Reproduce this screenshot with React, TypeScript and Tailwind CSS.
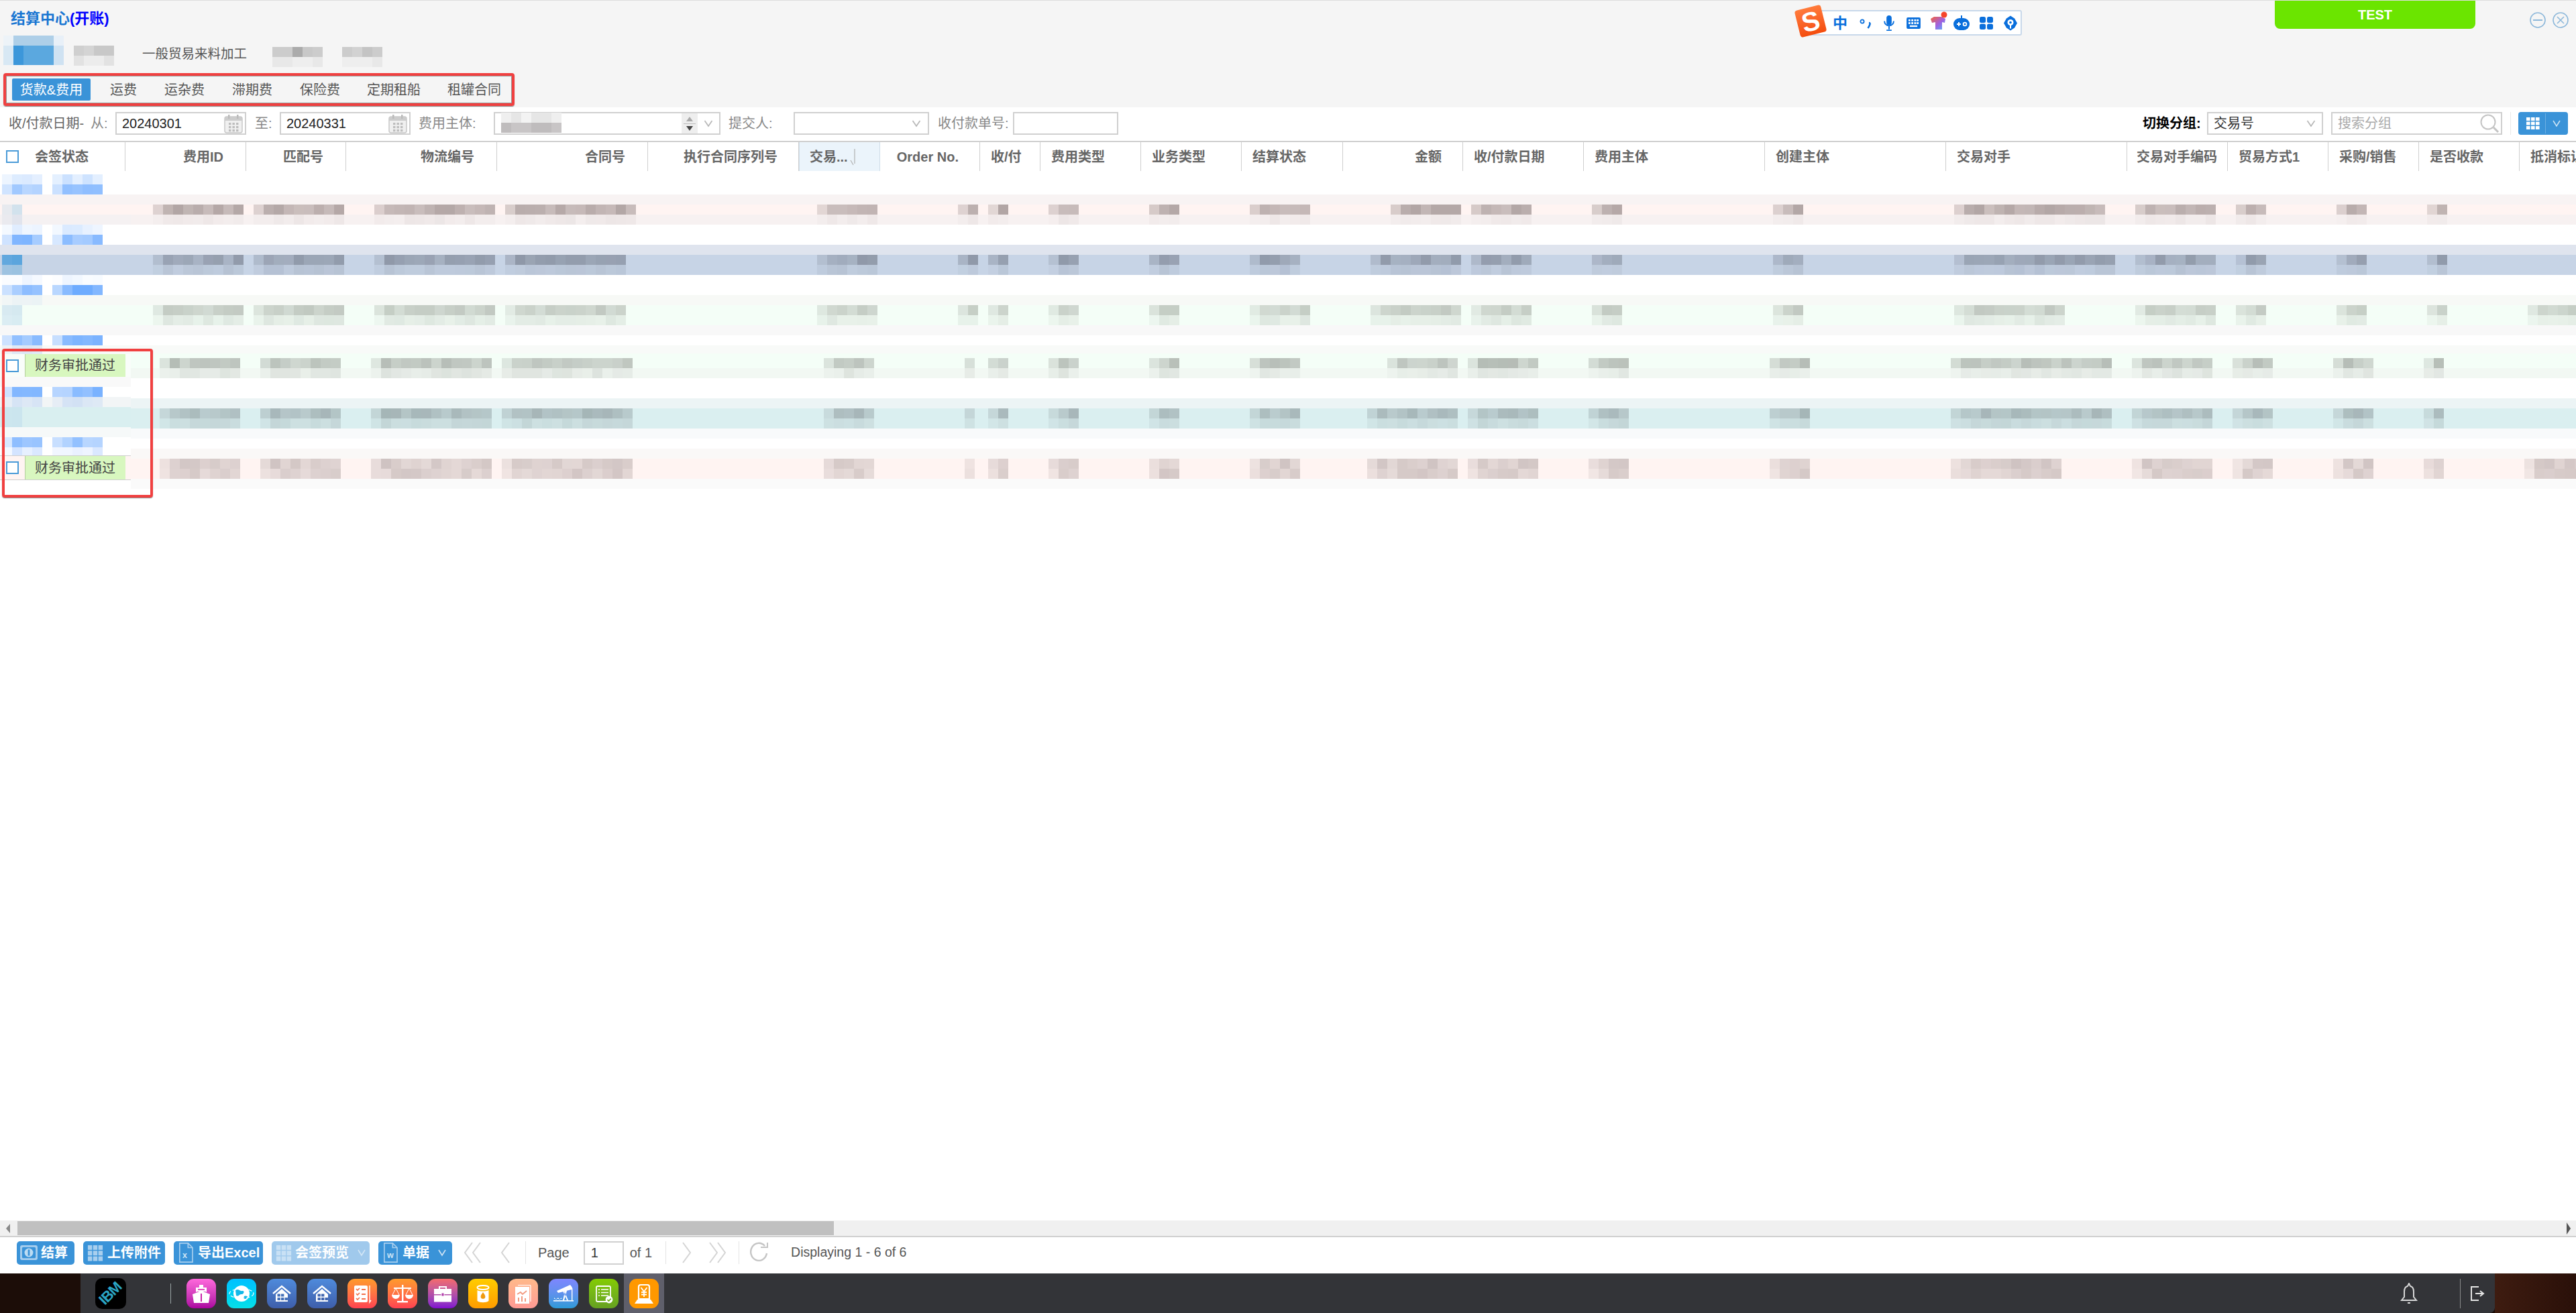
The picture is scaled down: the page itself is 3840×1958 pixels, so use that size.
import React from "react";

type Seg = [number, number];
function rng(seed: number) {
  let s = seed;
  return () => {
    s = (s * 1664525 + 1013904223) % 4294967296;
    return s / 4294967296;
  };
}

function Mosaic({ segs, left = 0, rgb, min, max, seed, width, h = 15 }: { segs: Seg[]; left?: number; rgb: string; min: number; max: number; seed: number; width: number; h?: number }) {
  const r = rng(seed);
  const rects: React.ReactNode[] = [];
  segs.forEach(([a, b], si) => {
    for (let x = a, i = 0; x < b; x += 15, i++) {
      const edge = x === a ? 0.55 : 1;
      const o = (min + (max - min) * r()) * edge;
      rects.push(<rect key={si + "-" + i} x={x - left} y={0} width={Math.min(15, b - x)} height={h} fill={rgb} opacity={o} />);
    }
  });
  return (
    <svg width={width} height={h} className="block" shapeRendering="crispEdges">
      {rects}
    </svg>
  );
}

const segA: Seg[] = [[228, 363], [378, 513], [558, 738], [753, 948], [1218, 1308], [1428, 1458], [1473, 1503], [1563, 1608], [1713, 1758], [1863, 1953], [2073, 2178], [2193, 2283], [2373, 2418], [2643, 2688], [2913, 3138], [3183, 3303], [3333, 3378], [3483, 3528], [3618, 3648]];
const segB: Seg[] = [[228, 363], [378, 513], [558, 738], [753, 933], [1218, 1308], [1428, 1458], [1473, 1503], [1563, 1608], [1713, 1758], [1863, 1938], [2043, 2178], [2193, 2283], [2373, 2418], [2643, 2688], [2913, 3153], [3183, 3303], [3333, 3378], [3483, 3528], [3618, 3648]];
const segC: Seg[] = [[228, 363], [378, 513], [558, 738], [753, 933], [1218, 1308], [1428, 1458], [1473, 1503], [1563, 1608], [1713, 1758], [1863, 1953], [2043, 2178], [2193, 2283], [2373, 2418], [2643, 2688], [2913, 3078], [3183, 3303], [3333, 3378], [3483, 3528], [3618, 3648], [3768, 3840]];
const segE: Seg[] = [[238, 358], [388, 508], [553, 733], [748, 943], [1228, 1303], [1438, 1453], [1473, 1503], [1563, 1608], [1713, 1758], [1863, 1938], [2068, 2173], [2188, 2293], [2368, 2428], [2638, 2698], [2908, 3148], [3178, 3298], [3328, 3388], [3478, 3538], [3613, 3643]];
const segF: Seg[] = [[238, 358], [388, 508], [553, 733], [748, 943], [1228, 1303], [1438, 1453], [1473, 1503], [1563, 1608], [1713, 1758], [1863, 1938], [2038, 2173], [2188, 2293], [2368, 2428], [2638, 2698], [2908, 3148], [3178, 3298], [3328, 3388], [3478, 3538], [3613, 3643]];
const segG: Seg[] = [[238, 358], [388, 508], [553, 733], [748, 943], [1228, 1303], [1438, 1453], [1473, 1503], [1563, 1608], [1713, 1758], [1863, 1938], [2038, 2173], [2188, 2293], [2368, 2428], [2638, 2698], [2908, 3073], [3178, 3298], [3328, 3388], [3478, 3538], [3613, 3643], [3763, 3840]];

const blueSegs: Seg[] = [[3, 63], [78, 153]];
const RW = 3645;

function LM({ segs = blueSegs, rgb = "#3b8eff", min = 0.4, max = 0.8, seed }: { segs?: Seg[]; rgb?: string; min?: number; max?: number; seed: number }) {
  return <Mosaic segs={segs} rgb={rgb} min={min} max={max} seed={seed} width={195} />;
}
function RM({ segs, rgb, min, max, seed }: { segs: Seg[]; rgb: string; min: number; max: number; seed: number }) {
  return <Mosaic segs={segs} left={195} rgb={rgb} min={min} max={max} seed={seed} width={RW} />;
}

function Check() {
  return <div className="w-[19px] h-[19px] border-2 border-[#4a9bd8] bg-white shrink-0" />;
}

function Cal() {
  return (
    <svg width="28" height="30" viewBox="0 0 28 30" fill="none" className="absolute right-[3px] top-[1px]">
      <rect x="1" y="4" width="26" height="24" rx="3" fill="#f0f0f0" stroke="#c8c8c8" strokeWidth="1.5" />
      <rect x="1" y="4" width="26" height="6" fill="#cccccc" />
      <rect x="6" y="1" width="2.5" height="6" fill="#bbbbbb" />
      <rect x="19" y="1" width="2.5" height="6" fill="#bbbbbb" />
      {[7, 12.5, 18].map((x) => [13, 18, 23].map((y) => <rect key={x + "-" + y} x={x} y={y} width="3.4" height="3.2" fill="#bdbdbd" />))}
    </svg>
  );
}

function Chev({ className = "" }: { className?: string }) {
  return (
    <svg width="14" height="12" viewBox="0 0 14 12" fill="none" className={className}>
      <path d="M1.5 2 L7 10 L12.5 2" stroke="#b5b5b5" strokeWidth="1.6" />
    </svg>
  );
}

function Input({ w, children }: { w: string; children?: React.ReactNode }) {
  return <div className={"relative h-[34px] border-2 border-[#d0d0d0] bg-white flex items-center shrink-0 " + w}>{children}</div>;
}

const headCols: { c: string; t: string }[] = [
  { c: "w-[180px] justify-end pr-[33px]", t: "费用ID" },
  { c: "w-[149px] justify-end pr-[33px]", t: "匹配号" },
  { c: "w-[225px] justify-end pr-[33px]", t: "物流编号" },
  { c: "w-[225px] justify-end pr-[33px]", t: "合同号" },
  { c: "w-[225px] justify-end pr-[31px]", t: "执行合同序列号" },
];
const headCols2: { c: string; t: string }[] = [
  { c: "w-[149px] justify-end pr-[31px]", t: "Order No." },
  { c: "w-[90px] pl-[16px]", t: "收/付" },
  { c: "w-[150px] pl-[16px]", t: "费用类型" },
  { c: "w-[150px] pl-[16px]", t: "业务类型" },
  { c: "w-[151px] pl-[16px]", t: "结算状态" },
  { c: "w-[179px] justify-end pr-[31px]", t: "金额" },
  { c: "w-[180px] pl-[16px]", t: "收/付款日期" },
  { c: "w-[270px] pl-[16px]", t: "费用主体" },
  { c: "w-[270px] pl-[16px]", t: "创建主体" },
  { c: "w-[270px] pl-[16px]", t: "交易对手" },
  { c: "w-[150px] pl-[14px]", t: "交易对手编码" },
  { c: "w-[150px] pl-[16px]", t: "贸易方式1" },
  { c: "w-[135px] pl-[16px]", t: "采购/销售" },
  { c: "w-[150px] pl-[16px]", t: "是否收款" },
];

function HCell({ c, t }: { c: string; t: string }) {
  return <div className={"h-full flex items-center border-r border-[#cfcfcf] shrink-0 " + c}>{t}</div>;
}

function Approved({ cls }: { cls: string }) {
  return (
    <div className={"flex items-center " + cls}>
      <div className="w-[9px]" />
      <Check />
      <div className="w-[9px]" />
      <div className="w-[150px] h-full bg-[#d8f7bf] border-l border-[#b5cfa0] flex items-center pl-[14px] text-[20px] text-[#444]">财务审批通过</div>
    </div>
  );
}

function Sogou() {
  return (
    <div className="absolute left-[2676px] top-[8px] w-[340px] h-[46px]">
      <div className="absolute left-[14px] top-[6px] w-[324px] h-[38px] bg-white border-2 border-[#c8d8ea] rounded-[3px]" />
      <div className="absolute left-[3px] top-[2px] w-[40px] h-[41px] rounded-[4px] bg-gradient-to-b from-[#ff7a3a] to-[#f44c0c] -rotate-[14deg] flex items-center justify-center text-white font-bold text-[40px] leading-none">S</div>
      <div className="absolute left-[56px] top-[13px] w-[22px] h-[26px] text-[#0a6fdc] font-bold text-[22px] leading-[26px] text-center">中</div>
      <svg className="absolute left-[96px] top-[18px]" width="18" height="16" viewBox="0 0 18 16" fill="none">
        <circle cx="4" cy="5" r="2.6" stroke="#0a6fdc" strokeWidth="1.8" />
        <path d="M14 7 a1.6 1.6 0 0 1 1.5 2 c-.4 2 -1.5 4 -3 6" stroke="#0a6fdc" strokeWidth="2.6" />
      </svg>
      <svg className="absolute left-[131px] top-[14px]" width="18" height="23" viewBox="0 0 22 30" fill="none">
        <rect x="6" y="0" width="10" height="19" rx="5" fill="#0a6fdc" />
        <path d="M2 11 a9 9 0 0 0 18 0 M11 21 v6 M6 29 h10" stroke="#0a6fdc" strokeWidth="2.5" />
      </svg>
      <svg className="absolute left-[166px] top-[17px]" width="21" height="17" viewBox="0 0 22 18">
        <rect x="0" y="0" width="22" height="18" rx="2" fill="#0a6fdc" />
        {[3, 7.5, 12, 16].map((x) => [3, 7.5].map((y) => <rect key={x + "," + y} x={x} y={y} width="3" height="3" fill="#fff" />))}
        <rect x="5" y="12.5" width="12" height="2.5" fill="#fff" />
      </svg>
      <svg className="absolute left-[200px] top-[7px]" width="28" height="30" viewBox="0 0 28 30">
        <defs>
          <linearGradient id="shirt" x1="0" y1="0" x2="1" y2="1">
            <stop offset="0" stopColor="#f6643c" />
            <stop offset="0.55" stopColor="#a060e0" />
            <stop offset="1" stopColor="#50b8ff" />
          </linearGradient>
        </defs>
        <path d="M7 9 L13 9 L18 9 L24 12 L23 18 L19 17 L19 28 L9 28 L9 17 L4 18 L2 12 Z" fill="url(#shirt)" />
        <circle cx="22" cy="6" r="4.5" fill="#f5452a" />
      </svg>
      <svg className="absolute left-[236px] top-[14px]" width="24" height="22" viewBox="0 0 24 22">
        <path d="M11 0 h2 v5 h-2z" fill="#0a6fdc" />
        <rect x="0" y="4" width="24" height="18" rx="9" fill="#0a6fdc" />
        <path d="M5 13 h6 M8 10 v6" stroke="#fff" strokeWidth="2" />
        <circle cx="17" cy="13" r="2.4" fill="none" stroke="#fff" strokeWidth="1.8" />
      </svg>
      <svg className="absolute left-[275px] top-[16px]" width="20" height="19" viewBox="0 0 20 19" fill="#0a6fdc">
        <rect x="0" y="0" width="9" height="9" rx="2.5" />
        <rect x="11" y="0" width="9" height="9" rx="2.5" />
        <rect x="0" y="10.5" width="9" height="8.5" rx="2.5" />
        <rect x="11" y="10.5" width="9" height="8.5" rx="2.5" />
      </svg>
      <svg className="absolute left-[311px] top-[14px]" width="20" height="23" viewBox="0 0 20 22">
        <path d="M10 0 L16 4 L20 11 L16 18 L10 22 L4 18 L0 11 L4 4 Z" fill="#0a6fdc" />
        <circle cx="10" cy="10" r="4.5" fill="#fff" />
        <path d="M9 10 h2 v9 h-2z" fill="#fff" />
        <circle cx="10" cy="10" r="1.8" fill="#0a6fdc" />
      </svg>
    </div>
  );
}

function Pix({ w, h, rects }: { w: number; h: number; rects: [number, number, number, number, string][] }) {
  return (
    <svg width={w} height={h} className="block shrink-0" shapeRendering="crispEdges">
      {rects.map((r, i) => (
        <rect key={i} x={r[0]} y={r[1]} width={r[2]} height={r[3]} fill={r[4]} />
      ))}
    </svg>
  );
}

function grayBlock(cols: number, seed: number, dark: string[], light: string[]): [number, number, number, number, string][] {
  const r = rng(seed);
  const out: [number, number, number, number, string][] = [];
  for (let i = 0; i < cols; i++) {
    out.push([i * 15, 0, 15, 15, dark[Math.floor(r() * dark.length)]]);
    out.push([i * 15, 15, 15, 15, light[Math.floor(r() * light.length)]]);
  }
  return out;
}

const tabs = [
  { t: "运费", c: "ml-[29px]" },
  { t: "运杂费", c: "ml-[41px]" },
  { t: "滞期费", c: "ml-[41px]" },
  { t: "保险费", c: "ml-[41px]" },
  { t: "定期租船", c: "ml-[40px]" },
  { t: "租罐合同", c: "ml-[40px]" },
];

function BtnIcon({ kind, dim }: { kind: "money" | "grid" | "x" | "w"; dim?: boolean }) {
  if (kind === "money")
    return (
      <svg width="28" height="24" viewBox="0 0 30 26">
        <rect x="1" y="1" width="28" height="24" rx="3" fill="#a9cfee" />
        <rect x="4" y="4" width="22" height="18" rx="2" fill="#3a93d8" />
        <circle cx="15" cy="13" r="7" fill="#bcdcf3" />
        <rect x="13.5" y="8" width="3" height="10" fill="#3a93d8" />
      </svg>
    );
  if (kind === "grid")
    return (
      <svg width="24" height="26" viewBox="0 0 26 28" fill={dim ? "#c9e1f5" : "#a9cfee"}>
        {[1, 9.5, 18].map((x) => [2, 11, 20].map((y) => <rect key={x + "," + y} x={x} y={y} width="7" height="7.5" />))}
      </svg>
    );
  return (
    <svg width="22" height="30" viewBox="0 0 26 36" fill="none">
      <path d="M2 1 H17 L25 9 V35 H2 Z" stroke="#a9cfee" strokeWidth="2" />
      <path d="M17 1 V9 H25" stroke="#a9cfee" strokeWidth="2" />
      <text x="7" y="28" fontSize="15" fontWeight="700" fill="#cfe5f6" fontFamily="Liberation Sans">{kind === "x" ? "x" : "w"}</text>
    </svg>
  );
}

function Btn({ w, icon, t, chev, dim, gap }: { w: string; icon: "money" | "grid" | "x" | "w"; t: string; chev?: boolean; dim?: boolean; gap: string }) {
  return (
    <div className={"h-[35px] rounded-[5px] flex items-center text-white font-bold text-[20px] overflow-hidden shrink-0 " + w + (dim ? " bg-[#a0c9ec]" : " bg-[#3a93d8]")}>
      <div className={"flex items-center justify-center " + gap}>
        <BtnIcon kind={icon} dim={dim} />
      </div>
      <span className="whitespace-nowrap">{t}</span>
      {chev && (
        <svg width="14" height="12" viewBox="0 0 14 12" fill="none" className="ml-[12px]">
          <path d="M2 2 L7 10 L12 2" stroke="#d3e6f6" strokeWidth="1.6" />
        </svg>
      )}
    </div>
  );
}

function Chevs({ dir, n, w }: { dir: "l" | "r"; n: 1 | 2; w: string }) {
  const ds = n === 2 ? [0, 12] : [0];
  return (
    <svg width={n === 2 ? 30 : 20} height="34" viewBox={n === 2 ? "0 0 30 34" : "0 0 20 34"} fill="none" className={w}>
      {ds.map((o) => (
        <path key={o} d={dir === "l" ? `M${14 + o} 2 L${3 + o} 17 L${14 + o} 32` : `M${3 + o} 2 L${14 + o} 17 L${3 + o} 32`} stroke="#d4d4d4" strokeWidth="2" />
      ))}
    </svg>
  );
}

const W = "#ffffff";
const dockGlyphs: React.ReactNode[] = [
  <g key="ship" fill={W}>
    <path d="M19 9 h6 v4 h-6z" />
    <path d="M14 13 h16 v7 l-2 -1 h-12 l-2 1z" />
    <path d="M9 23 L22 18 L35 23 L33 36 H11 Z" />
    <rect x="21" y="22" width="2" height="12" fill="#c820a8" />
    <rect x="17" y="15" width="10" height="2" fill="#e050c0" />
  </g>,
  <g key="globe">
    <circle cx="22" cy="22" r="12" fill={W} />
    <path d="M13 17 c5 -3 6 2 10 1 c4 -1 3 5 -1 5 c-4 0 -4 4 -8 2z M26 26 c3 -1 6 0 5 2 c-2 2 -5 3 -6 1z" fill="#14b8e8" />
    <ellipse cx="22" cy="22" rx="18" ry="7" fill="none" stroke={W} strokeWidth="1.2" strokeDasharray="5 3" />
  </g>,
  <g key="house1">
    <path d="M9 22 L22 11 L35 22" fill="none" stroke={W} strokeWidth="2.4" />
    <path d="M13 23 L22 15 L31 23 V34 H13 Z" fill={W} />
    {[15.5, 21, 26.5].map((x) => <rect key={x} x={x} y="28" width="4.4" height="4" fill="#4570b8" />)}
    {[15.5, 21].map((x) => <rect key={x} x={x} y="22.5" width="4.4" height="4" fill="#4570b8" />)}
  </g>,
  <g key="house2">
    <path d="M9 22 L22 11 L35 22" fill="none" stroke={W} strokeWidth="2.4" />
    <path d="M13 23 L22 15 L31 23 V34 H13 Z" fill={W} />
    {[15.5, 21, 26.5].map((x) => <rect key={x} x={x} y="28" width="4.4" height="4" fill="#4166b0" />)}
    {[15.5, 21].map((x) => <rect key={x} x={x} y="22.5" width="4.4" height="4" fill="#4166b0" />)}
  </g>,
  <g key="list">
    <rect x="10" y="10" width="20" height="25" rx="2" fill={W} />
    <path d="M13 15 l2 2 l3 -3 M13 22 l2 2 l3 -3 M13 29 l2 2 l3 -3" stroke="#f2704a" strokeWidth="1.7" fill="none" />
    <path d="M21 16 h6 M21 23 h6 M21 30 h6" stroke="#f2704a" strokeWidth="1.8" />
    <path d="M33 10 V35 l2 -3" stroke={W} strokeWidth="1.4" fill="none" />
  </g>,
  <g key="scale" fill={W}>
    <rect x="21" y="9" width="2.4" height="24" />
    <rect x="14" y="33" width="16" height="2.4" />
    <rect x="9" y="13" width="26" height="2" />
    <path d="M6 24 h12 a6 6 0 0 1 -12 0z M26 24 h12 a6 6 0 0 1 -12 0z" />
    <path d="M12 14 L7 24 M12 14 L17 24 M32 14 L27 24 M32 14 L37 24" stroke={W} strokeWidth="1" fill="none" />
  </g>,
  <g key="case">
    <path d="M17 16 v-4 h10 v4" stroke={W} strokeWidth="2" fill="none" />
    <rect x="9" y="15" width="26" height="8" fill={W} />
    <rect x="9" y="24.5" width="26" height="10" fill={W} />
    <rect x="20" y="21" width="4" height="5" fill="#b03aa8" stroke={W} />
  </g>,
  <g key="barrel">
    <ellipse cx="22" cy="13" rx="8.5" ry="3" fill="none" stroke={W} strokeWidth="2" />
    <path d="M13.5 17 c4 2 13 2 17 0 V33 c-4 3 -13 3 -17 0 Z" fill={W} />
    <path d="M22 20 c2 3 3.4 4.5 3.4 6.4 a3.4 3.4 0 0 1 -6.8 0 c0 -1.9 1.4 -3.4 3.4 -6.4z" fill="#f09a10" />
  </g>,
  <g key="chart">
    <rect x="10" y="12" width="21" height="25" fill={W} />
    <path d="M33 10 V34 M14 9.5 H33" stroke={W} strokeWidth="1.2" fill="none" />
    <path d="M13 23 l5 -3 l3 3 l6 -5" stroke="#f29a80" strokeWidth="1.8" fill="none" />
    <path d="M15 34 v-6 M20 34 v-8 M25 34 v-5" stroke="#f29a80" strokeWidth="2" />
  </g>,
  <g key="pump" fill={W}>
    <path d="M12 18 L32 9 L35 13 L34 16 L14 21 Z" />
    <path d="M22 15 L29 32 H27 L21 18 Z M25 15 L21 32 H23 L27 18Z" />
    <rect x="34" y="14" width="1.4" height="18" />
    <rect x="7" y="32" width="30" height="1.6" />
    <path d="M8 28 l3 3 l3 -3 l2 3 l3 -3 v2 h-11z" />
  </g>,
  <g key="doc">
    <rect x="11" y="11" width="21" height="23" rx="2" fill="none" stroke={W} strokeWidth="1.8" />
    <path d="M18 16 h11 M18 20.5 h11 M18 25 h11" stroke={W} strokeWidth="1.6" />
    <path d="M14 16 h2 M14 20.5 h2 M14 25 h2" stroke={W} strokeWidth="1.6" />
    <circle cx="30" cy="31" r="5.4" fill={W} />
    <path d="M27.4 31 l2 2 l3.4 -3.4" stroke="#6aab10" strokeWidth="1.6" fill="none" />
  </g>,
  <g key="kiosk">
    <path d="M14 12 a3 3 0 0 1 3 -3 h10 a3 3 0 0 1 3 3 V30 H14 Z" fill="none" stroke={W} strokeWidth="2.2" />
    <path d="M17.5 13 L22 19 L26.5 13 M22 19 V27 M18 20 H26 M18 23.5 H26" stroke={W} strokeWidth="1.8" fill="none" />
    <path d="M12 31 H32 L36 37 H8 Z" fill={W} />
  </g>,
];
const dockBg = [
  "bg-gradient-to-b from-[#ff68dc] to-[#ac00a0]",
  "bg-gradient-to-b from-[#00c0ff] to-[#08e0e8]",
  "bg-gradient-to-b from-[#4f8bdc] to-[#3e5eaa]",
  "bg-gradient-to-b from-[#4f8bdc] to-[#3e5eaa]",
  "bg-gradient-to-b from-[#ff9a2a] to-[#ff4050]",
  "bg-gradient-to-b from-[#ff9a2a] to-[#ff4050]",
  "bg-gradient-to-b from-[#f46a6a] to-[#8208d0]",
  "bg-gradient-to-b from-[#ffcc00] to-[#ff9c00]",
  "bg-gradient-to-b from-[#ffb98a] to-[#ff9a94]",
  "bg-gradient-to-b from-[#7d86ff] to-[#2c9ad8]",
  "bg-gradient-to-b from-[#84cc00] to-[#66a020]",
  "bg-[#ff9800]",
];

function DockIcon({ i }: { i: number }) {
  return (
    <div className={"w-[44px] h-[44px] rounded-[11px] shrink-0 " + dockBg[i]}>
      <svg width="44" height="44" viewBox="0 0 44 44">
        {dockGlyphs[i]}
      </svg>
    </div>
  );
}

export default function App() {
  return (
    <div className="w-[3840px] h-[1958px] flex flex-col overflow-hidden relative bg-white text-[20px] leading-none" style={{ fontFamily: '"Liberation Sans","Noto Sans CJK SC",sans-serif' }}>
      {/* header */}
      <div className="h-[160px] shrink-0 bg-[#f5f5f5] border-t border-[#dddddd] relative">
        <div className="h-[54px] flex items-center pl-[16px] text-[22px] font-bold text-[#1a76d2]">
          结算中心<span className="text-[#0000ff]">(开账)</span>
        </div>
        <div className="h-[54px] flex text-[19.5px] text-[#555555]">
          <div className="ml-[5px] w-[90px] shrink-0 -mt-[2px]">
            <Pix w={90} h={44} rects={[[0, 0, 15, 15, "#edf3f8"], [15, 0, 60, 15, "#aecfe8"], [75, 0, 15, 15, "#e8f0f8"], [0, 15, 15, 29, "#d8e8f4"], [15, 15, 15, 29, "#3c97da"], [30, 15, 45, 29, "#5ba8df"], [75, 15, 15, 29, "#cfe2f2"]]} />
          </div>
          <div className="ml-[15px] mt-[13px]">
            <Pix w={60} h={30} rects={grayBlock(4, 3, ["#cfcfcf", "#c8c8c8", "#d4d4d4"], ["#e8e8e8", "#e2e2e2", "#ececec"])} />
          </div>
          <div className="ml-[42px] mt-[16px] whitespace-nowrap w-[194px]">一般贸易来料加工</div>
          <div className="mt-[15px]">
            <Pix w={76} h={30} rects={[...grayBlock(5, 5, ["#cccccc", "#c8c8c8", "#ababab"], ["#eeeeee", "#e8e8e8"])]} />
          </div>
          <div className="ml-[28px] mt-[15px]">
            <Pix w={60} h={30} rects={grayBlock(4, 9, ["#cccccc", "#c4c4c4", "#d2d2d2"], ["#eeeeee", "#e8e8e8"])} />
          </div>
        </div>
        <div className="ml-[5px] w-[762px] h-[49px] border-[4px] border-[#f04040] rounded-[4px] flex items-center pl-[9px] text-[#555555] shadow-[inset_0_0_0_1px_#999999,0_1px_1px_#888888]">
          <div className="w-[117px] h-[33px] bg-[#3a93d8] text-white rounded-[2px] flex items-center justify-center whitespace-nowrap">货款&amp;费用</div>
          {tabs.map((t) => (
            <div key={t.t} className={"whitespace-nowrap " + t.c}>{t.t}</div>
          ))}
        </div>

        <Sogou />
        <div className="absolute left-[3391px] top-0 w-[299px] h-[42px] bg-[#6be500] rounded-b-[8px] text-white font-bold text-[20px] flex items-center justify-center">TEST</div>
        <div className="absolute right-[11px] top-[17px] flex gap-[10px]">
          <svg width="24" height="24" viewBox="0 0 24 24" fill="none">
            <circle cx="12" cy="12" r="11" stroke="#8db8da" strokeWidth="1.6" />
            <path d="M5 12 H19" stroke="#8db8da" strokeWidth="2" />
          </svg>
          <svg width="24" height="24" viewBox="0 0 24 24" fill="none">
            <circle cx="12" cy="12" r="11" stroke="#8db8da" strokeWidth="1.6" />
            <path d="M7 7 L17 17 M17 7 L7 17" stroke="#8db8da" strokeWidth="1.6" />
          </svg>
        </div>
      </div>

      {/* filter row */}
      <div className="h-[52px] shrink-0 border-b-2 border-[#d0d0d0] flex items-start pt-[7px] pl-[13px] pr-[12px] text-[#888888] text-[20px]">
        <div className="w-[122px] h-[34px] flex items-center text-[#666666] whitespace-nowrap">收/付款日期-</div>
        <div className="w-[37px] h-[34px] flex items-center">从:</div>
        <Input w="w-[195px]">
          <span className="pl-[8px] text-[#222222]">20240301</span>
          <Cal />
        </Input>
        <div className="ml-[13px] w-[37px] h-[34px] flex items-center">至:</div>
        <Input w="w-[195px]">
          <span className="pl-[8px] text-[#222222]">20240331</span>
          <Cal />
        </Input>
        <div className="ml-[12px] w-[112px] h-[34px] flex items-center whitespace-nowrap">费用主体:</div>
        <Input w="w-[338px]">
          <div className="-mt-[2px] ml-[9px]">
            <Pix w={90} h={30} rects={grayBlock(6, 14, ["#efefef", "#e6e6e6", "#f3f3f3"], ["#c8c5c6", "#bfbcbd", "#e0e0e0"])} />
          </div>
          <div className="ml-auto h-full w-[24px] bg-[#eeeeee] flex flex-col items-center justify-center gap-[3px]">
            <div className="w-0 h-0 border-x-[5px] border-x-transparent border-b-[7px] border-b-[#aaaaaa]" />
            <div className="w-[18px] h-[1px] bg-[#bbbbbb]" />
            <div className="w-0 h-0 border-x-[5px] border-x-transparent border-t-[7px] border-t-[#444444]" />
          </div>
          <Chev className="ml-[9px] mr-[9px]" />
        </Input>
        <div className="ml-[12px] w-[97px] h-[34px] flex items-center whitespace-nowrap">提交人:</div>
        <Input w="w-[202px]">
          <Chev className="ml-auto mr-[10px]" />
        </Input>
        <div className="ml-[13px] w-[112px] h-[34px] flex items-center whitespace-nowrap">收付款单号:</div>
        <Input w="w-[157px]" />
        <div className="ml-auto w-[96px] h-[34px] flex items-center text-black font-bold whitespace-nowrap">切换分组:</div>
        <Input w="w-[173px]">
          <span className="pl-[8px] text-[#333333]">交易号</span>
          <Chev className="ml-auto mr-[9px]" />
        </Input>
        <Input w="ml-[12px] w-[255px]">
          <span className="pl-[8px] text-[#aaaaaa]">搜索分组</span>
          <svg width="30" height="30" viewBox="0 0 30 30" fill="none" className="ml-auto mr-[2px]">
            <circle cx="13" cy="13" r="10.5" stroke="#c4c4c4" strokeWidth="2" />
            <path d="M21 21 L28 28" stroke="#c4c4c4" strokeWidth="3" />
          </svg>
        </Input>
        <div className="ml-[12px] w-px h-[34px] bg-[#e8e8e8]" />
        <div className="ml-[11px] w-[74px] h-[34px] bg-[#3a93d8] rounded-[4px] flex items-center shrink-0">
          <svg width="20" height="20" viewBox="0 0 20 20" fill="#ffffff" className="ml-[12px]">
            {[0, 7, 14].map((x) => [1, 7.5, 14].map((y) => <rect key={x + "," + y} x={x} y={y} width="5.6" height="5" />))}
          </svg>
          <div className="ml-[8px] w-px h-[30px] bg-[#6eb0e2]" />
          <svg width="12" height="10" viewBox="0 0 12 10" fill="none" className="ml-[10px]">
            <path d="M1 1 L6 9 L11 1" stroke="#cfe5f6" strokeWidth="1.5" />
          </svg>
        </div>
      </div>

      {/* table head */}
      <div className="h-[43px] shrink-0 flex font-bold text-[#666666] text-[20px] whitespace-nowrap overflow-hidden">
        <div className="w-[187px] h-full shrink-0 flex items-center pl-[9px] border-r border-[#cfcfcf]">
          <Check />
          <span className="ml-[24px]">会签状态</span>
        </div>
        {headCols.map((h) => <HCell key={h.t} c={h.c} t={h.t} />)}
        <div className="w-[121px] h-full shrink-0 flex items-center pl-[15px] bg-[#ebf4fb] border-x border-[#cfdde8]">
          交易...
          <svg width="10" height="28" viewBox="0 0 10 28" fill="none" className="ml-[2px]">
            <path d="M8 2 V24 M2 19 L6 26" stroke="#b0b0b0" strokeWidth="1.2" />
          </svg>
        </div>
        {headCols2.map((h) => <HCell key={h.t} c={h.c} t={h.t} />)}
        <div className="pl-[16px] flex items-center shrink-0">抵消标识</div>
      </div>

      {/* table body */}
      <div className="flex-1 min-h-0 flex relative overflow-hidden">
        <div className="w-[195px] shrink-0 flex flex-col">
          <div className="h-[5px]" />
          <LM seed={11} rgb="#5aa0ff" min={0.15} max={0.35} />
          <LM seed={12} rgb="#3b8eff" min={0.35} max={0.7} />
          <div className="h-[15px] bg-[#f8f3f3]" />
          <div className="h-[15px] bg-[#fff4f2]"><LM segs={[[3, 33]]} seed={13} rgb="#cfe0ec" min={0.9} max={1} /></div>
          <div className="h-[15px] bg-[#f5f1f2]"><LM segs={[[3, 33]]} seed={14} rgb="#dfe3ec" min={0.9} max={1} /></div>
          <LM seed={15} rgb="#5aa0ff" min={0.08} max={0.25} />
          <LM seed={16} rgb="#3b8eff" min={0.35} max={0.75} />
          <div className="h-[15px] bg-[#dfe4ee]" />
          <div className="h-[15px] bg-[#c7d4e6]"><LM segs={[[3, 33]]} seed={17} rgb="#5ba5dd" min={1.6} max={2} /></div>
          <div className="h-[15px] bg-[#c7d4e6]"><LM segs={[[3, 33]]} seed={18} rgb="#9bc2e0" min={1.6} max={2} /></div>
          <LM seed={19} rgb="#5aa0ff" min={0.03} max={0.12} />
          <LM seed={20} rgb="#3b8eff" min={0.4} max={0.75} />
          <div className="h-[15px] bg-[#f7f9f6]"><LM segs={[[3, 63]]} seed={21} rgb="#e4eff4" min={0.5} max={0.8} /></div>
          <div className="h-[15px] bg-[#f4fef7]"><LM segs={[[3, 33]]} seed={22} rgb="#d5e9f0" min={1.6} max={2} /></div>
          <div className="h-[15px] bg-[#f4fef7]"><LM segs={[[3, 33]]} seed={23} rgb="#d8ecf2" min={1.6} max={2} /></div>
          <div className="h-[15px] bg-[#f8f8f8]" />
          <LM seed={24} rgb="#3b8eff" min={0.35} max={0.8} />
          <div className="h-[13px] bg-[#f8faf8]"><Mosaic segs={[[3, 63]]} rgb="#dbe6f4" min={0.7} max={1} seed={25} width={195} h={13} /></div>
          <Approved cls="h-[34px] bg-[#f9fdf9]" />
          <div className="h-[15px] bg-[#f9f9f9]" />
          <LM seed={26} rgb="#3b8eff" min={0.35} max={0.8} />
          <div className="h-[15px] bg-[#f2f5f6]"><LM seed={27} rgb="#bcd4f4" min={0.3} max={0.6} /></div>
          <div className="h-[30px] bg-[#d9eff0]"><Mosaic segs={[[3, 33]]} rgb="#cbe5ee" min={1.6} max={2} seed={28} width={195} h={30} /></div>
          <div className="h-[15px] bg-[#f6f9f9]" />
          <LM seed={29} rgb="#3b8eff" min={0.3} max={0.6} />
          <div className="h-[12px]"><Mosaic segs={blueSegs} rgb="#a8c8ff" min={0.15} max={0.5} seed={30} width={195} h={12} /></div>
          <Approved cls="h-[37px] bg-[#fff4f2] border-y border-[#cfcfcf]" />
        </div>

        <div className="flex-1 min-w-0 flex flex-col">
          <div className="h-[35px]" />
          <div className="h-[15px] bg-[#f8f3f3]" />
          <div className="h-[15px] bg-[#fff4f2]"><RM segs={segA} rgb="#6a5c5c" min={0.35} max={0.52} seed={101} /></div>
          <div className="h-[15px] bg-[#f7f1f1]"><RM segs={segA} rgb="#6a5c5c" min={0.02} max={0.07} seed={102} /></div>
          <div className="h-[30px]" />
          <div className="h-[15px] bg-[#dfe4ee]" />
          <div className="h-[15px] bg-[#c7d4e6]"><RM segs={segB} rgb="#5c6270" min={0.28} max={0.52} seed={103} /></div>
          <div className="h-[15px] bg-[#c7d4e6]"><RM segs={segB} rgb="#5c6270" min={0.06} max={0.16} seed={104} /></div>
          <div className="h-[30px]" />
          <div className="h-[15px] bg-[#f7f9f6]" />
          <div className="h-[15px] bg-[#f4fef7]"><RM segs={segC} rgb="#666a60" min={0.22} max={0.36} seed={105} /></div>
          <div className="h-[15px] bg-[#f4fef7]"><RM segs={segC} rgb="#666a60" min={0.08} max={0.16} seed={106} /></div>
          <div className="h-[15px] bg-[#f8f8f8]" />
          <div className="h-[15px]" />
          <div className="h-[12px] bg-[#f8faf8]" />
          <div className="h-[7px] bg-[#f4fef7]" />
          <div className="h-[15px] bg-[#f4fef7]"><RM segs={segE} rgb="#5f625c" min={0.25} max={0.42} seed={107} /></div>
          <div className="h-[15px] bg-[#f2f8f3]"><RM segs={segE} rgb="#5f625c" min={0.05} max={0.14} seed={108} /></div>
          <div className="h-[30px]" />
          <div className="h-[15px] bg-[#ecf4f5]" />
          <div className="h-[15px] bg-[#daeff0]"><RM segs={segF} rgb="#5c6468" min={0.25} max={0.42} seed={109} /></div>
          <div className="h-[15px] bg-[#daeff0]"><RM segs={segF} rgb="#5c6468" min={0.1} max={0.18} seed={110} /></div>
          <div className="h-[15px] bg-[#f8fafb]" />
          <div className="h-[15px]" />
          <div className="h-[15px] bg-[#faf8f7]" />
          <div className="h-[15px] bg-[#fff4f2]"><RM segs={segG} rgb="#6a5c5c" min={0.18} max={0.32} seed={111} /></div>
          <div className="h-[15px] bg-[#fff4f2]"><RM segs={segG} rgb="#6a5c5c" min={0.16} max={0.3} seed={112} /></div>
          <div className="h-[15px] bg-[#fafafa]" />
        </div>

        <div className="absolute left-[3px] top-[265px] w-[225px] h-[222px] border-[4px] border-[#f04040] rounded-[4px] shadow-[0_1px_1px_#888888] pointer-events-none" />
      </div>

      {/* scrollbar */}
      <div className="h-[25px] shrink-0 bg-[#f0f0f0] border-b-2 border-[#d0d0d0] flex items-center">
        <div className="ml-[9px] w-0 h-0 border-y-[7px] border-y-transparent border-r-[6px] border-r-[#888888]" />
        <div className="ml-[11px] w-[1217px] h-[21px] bg-[#c0c0c0]" />
        <div className="ml-auto mr-[8px] w-0 h-0 border-y-[9px] border-y-transparent border-l-[6px] border-l-[#555555]" />
      </div>

      {/* toolbar */}
      <div className="h-[54px] shrink-0 flex items-center pl-[25px] pb-[8px] text-[20px] text-[#555555]">
        <Btn w="w-[86px]" icon="money" t="结算" gap="w-[36px]" />
        <Btn w="ml-[13px] w-[122px]" icon="grid" t="上传附件" gap="w-[36px]" />
        <Btn w="ml-[13px] w-[133px]" icon="x" t="导出Excel" gap="w-[36px]" />
        <Btn w="ml-[13px] w-[146px]" icon="grid" t="会签预览" chev dim gap="w-[35px]" />
        <Btn w="ml-[13px] w-[110px]" icon="w" t="单据" chev gap="w-[36px]" />
        <Chevs dir="l" n={2} w="ml-[16px]" />
        <Chevs dir="l" n={1} w="ml-[25px]" />
        <div className="ml-[18px] w-px h-[34px] bg-[#e4e4e4]" />
        <span className="ml-[18px]">Page</span>
        <div className="ml-[21px] w-[60px] h-[35px] border-2 border-[#d0d0d0] flex items-center pl-[9px] text-[#333333]">1</div>
        <span className="ml-[9px]">of 1</span>
        <div className="ml-[20px] w-px h-[34px] bg-[#e4e4e4]" />
        <Chevs dir="r" n={1} w="ml-[22px]" />
        <Chevs dir="r" n={2} w="ml-[20px]" />
        <div className="ml-[16px] w-px h-[34px] bg-[#e4e4e4]" />
        <svg width="28" height="34" viewBox="0 0 28 34" fill="none" className="ml-[16px]">
          <path d="M22 7 A12 13 0 1 0 25 18" stroke="#c4c4c4" strokeWidth="2.4" />
          <path d="M16 9 L26 9 L26 2" stroke="#c4c4c4" strokeWidth="2" />
        </svg>
        <span className="ml-[33px] whitespace-nowrap text-[19.5px] text-[#555555]">Displaying 1 - 6 of 6</span>
      </div>

      {/* dock */}
      <div className="h-[59px] shrink-0 flex bg-[#1c0c07]">
        <div className="w-[120px] shrink-0 bg-[#1c0d08]" />
        <div className="flex-1 bg-[#333438] rounded-br-[8px] flex items-center pl-[22px]">
          <div className="w-[46px] h-[46px] rounded-[10px] bg-black flex items-center justify-center shrink-0 overflow-hidden">
            <span className="-rotate-45 font-bold text-[22px] tracking-tighter text-[#2ba6c4]">IBM</span>
          </div>
          <div className="ml-[66px] w-px h-[30px] bg-[#9aa5a5]" />
          <div className="ml-[23px] flex items-center gap-[16px] h-full">
            {dockBg.slice(0, 11).map((_, i) => <DockIcon key={i} i={i} />)}
            <div className="-mx-[8px] h-full px-[8px] flex items-center bg-[#5f5f6b]">
              <DockIcon i={11} />
            </div>
          </div>
          <svg width="26" height="32" viewBox="0 0 26 32" fill="none" className="ml-auto">
            <path d="M13 1 L15 5 C19 6 20 9 20 13 V21 L24 26 H2 L6 21 V13 C6 9 7 6 11 5 Z" stroke="#d8d8d8" strokeWidth="2" />
            <path d="M11 30 H15" stroke="#d8d8d8" strokeWidth="2" />
          </svg>
          <div className="ml-[63px] w-px h-[44px] bg-[#8a8a8a]" />
          <svg width="26" height="24" viewBox="0 0 26 24" fill="none" className="ml-[13px] mr-[12px]">
            <path d="M14 2 H3 V22 H14" stroke="#e4e4e4" strokeWidth="2" />
            <path d="M9 12 H20 M16 8 L21 12 L16 16" stroke="#e4e4e4" strokeWidth="2" />
          </svg>
        </div>
        <div className="w-[121px] shrink-0 bg-gradient-to-r from-[#3e1c10] to-[#2a1009]" />
      </div>
    </div>
  );
}
